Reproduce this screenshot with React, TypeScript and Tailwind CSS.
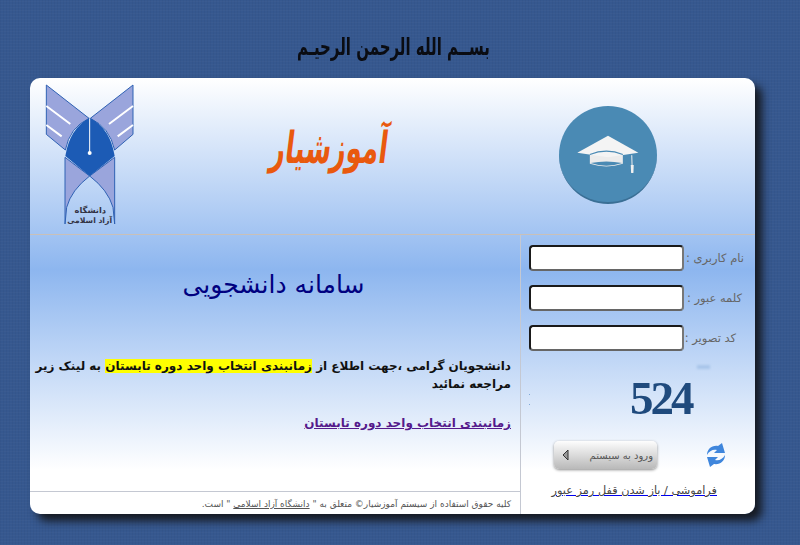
const fields = [
  { label: "نام کاربری :", pr: "pr-[11px]" },
  { label: "کلمه عبور :", pr: "pr-[13px]" },
  { label: "کد تصویر :", pr: "pr-[19px]" },
];

function UniversityLogo() {
  return (
    <svg viewBox="76 42 270 426" width="90" height="142">
      <g fill="#9aa5dc" stroke="#2f62b4" strokeWidth="3">
        <path d="M80 45 L208 145 Q150 172 137 240 L80 193 Z" />
        <path d="M340 45 L212 145 Q270 172 285 240 L340 193 Z" />
        <path d="M136 262 L210 318 Q155 360 141 412 L136 462 Z" />
        <path d="M285 262 L210 318 Q265 360 280 412 L285 462 Z" />
      </g>
      <path d="M137 258 Q150 175 210 143 Q272 175 285 258 L210 318 Z" fill="#1c5bb5" />
      <path d="M80 108 L152 162 M80 165 L126 199 M340 108 L268 162 M340 165 L294 199" stroke="#fff" strokeWidth="6" fill="none" />
      <path d="M210 145 L210 248" stroke="#fff" strokeWidth="3" />
      <circle cx="210" cy="249" r="6" fill="#fff" />
      <text x="212" y="430" textAnchor="middle" fontSize="25" fill="#334" fontFamily="'DejaVu Sans', sans-serif" fontWeight="700">
        دانشگاه
      </text>
      <text x="210" y="458" textAnchor="middle" fontSize="23" fill="#334" fontFamily="'DejaVu Sans', sans-serif" fontWeight="700">
        آزاد اسلامی
      </text>
    </svg>
  );
}

function CapBadge() {
  return (
    <div className="w-[98px] h-[98px] rounded-full bg-[#4a8ab4] border-b-2 border-[#3a6f95] flex items-center justify-center">
      <svg viewBox="105 115 200 130" width="66" height="43">
        <path d="M150 178 L150 208 Q200 224 250 208 L250 178 Q200 160 150 178 Z" fill="#ececec" />
        <path d="M152 206 Q200 196 248 206 Q200 222 152 206 Z" fill="#4a8ab4" />
        <path d="M205 123 L297 175 L205 188 L112 175 Z" fill="#f4f4f4" />
        <path d="M150 180 Q200 160 250 180" stroke="#4a8ab4" strokeWidth="4" fill="none" />
        <path d="M277 182 L278 215" stroke="#f0f0f0" strokeWidth="3" />
        <path d="M274 212 H283 L282 236 H275 Z" fill="#f0f0f0" />
      </svg>
    </div>
  );
}

function RefreshIcon() {
  return (
    <svg viewBox="0 0 20 24" width="20" height="24" className="ml-[49px]">
      <g fill="#3f86dc">
        <path d="M1 12 C1 6 6 2 12 3 L16 0 L19 10 L8 10 L11 7 C7 6 3 8 1 12 Z" />
        <path d="M19 12 C19 18 14 22 8 21 L4 24 L1 14 L12 14 L9 17 C13 18 17 16 19 12 Z" />
      </g>
    </svg>
  );
}

export default function App() {
  return (
    <div className="w-[800px] h-[545px] overflow-hidden flex flex-col bg-[#36588f] bg-[image:repeating-linear-gradient(0deg,rgba(255,255,255,0.02)_0_1px,transparent_1px_3px),repeating-linear-gradient(90deg,rgba(0,0,0,0.03)_0_1px,transparent_1px_3px)] font-['DejaVu_Sans',sans-serif]">
      <div dir="rtl" className="h-[78px] pt-[22px] pl-[298px] w-[490px] text-[#0a0c12] text-[15px] leading-[44px] font-bold whitespace-nowrap tracking-[-0.5px] scale-y-[1.6]">
        بســم الله الرحمن الرحیـم
      </div>

      <div className="ml-[30px] w-[725px] h-[436px] rounded-[10px] bg-[linear-gradient(180deg,#ffffff_0%,#8db6ef_44%,#ffffff_90%)] shadow-[7px_7px_9px_#161a22] flex flex-col overflow-hidden">
        <div className="h-[157px] shrink-0 border-b border-[#c9c0b8] flex items-start">
          <div className="w-[105px] pl-[15px] pt-[6px]">
            <UniversityLogo />
          </div>
          <div className="w-[253px] pt-[35px] pl-[128px]">
            <div dir="rtl" className="text-[#e9590e] text-[26px] leading-[70px] font-bold whitespace-nowrap -skew-x-12 scale-y-[1.7]">
              آموزشیار
            </div>
          </div>
          <div className="ml-auto pr-[98px] pt-[28px]">
            <CapBadge />
          </div>
        </div>

        <div dir="rtl" className="flex-1 flex">
          <div className="relative w-[235px] shrink-0 border-l border-[#c4c8d2] flex flex-col">
            <div className="pt-[10px] flex flex-col gap-[14px]">
              {fields.map((f) => (
                <div key={f.label} className="flex items-center">
                  <label className={`w-[71px] shrink-0 pt-[2px] text-[11.5px] text-[#666] whitespace-nowrap ${f.pr}`}>{f.label}</label>
                  <input className="w-[155px] h-[26px] bg-white rounded-[4px] border-2 border-t-[#1a1a1a] border-l-[#1a1a1a] border-r-[#777] border-b-[#666]" />
                </div>
              ))}
            </div>

            <span className="absolute left-[176px] top-[130px] w-[13px] h-[4px] bg-[#a9c6ea] blur-[1px]" />
            <span className="absolute left-[8px] top-[159px] w-[1px] h-[1px] bg-[#7fa8d8]" />
            <span className="absolute left-[8px] top-[169px] w-[1px] h-[1px] bg-[#7fa8d8]" />

            <div dir="ltr" className="h-[90px] pl-[109px] pt-[22px] text-[#1f4a7d] text-[47px] leading-[50px] font-bold tracking-[-3px] font-['Liberation_Serif',serif]">
              <span className="blur-[0.6px]">524</span>
            </div>

            <div dir="ltr" className="flex items-center pl-[33px]">
              <button className="w-[103px] h-[28px] rounded-[5px] bg-[linear-gradient(180deg,#fdfdfd,#b9b9b9)] shadow-[0_1px_3px_#8a8a8a] flex items-center pl-[8px] pr-[4px] justify-between">
                <svg viewBox="0 0 7 12" width="7" height="12">
                  <path d="M6 1 L1 6 L6 11 Z" fill="#999" stroke="#333" strokeWidth="1" />
                </svg>
                <span dir="rtl" className="text-[10px] text-[#555] whitespace-nowrap">ورود به سیستم</span>
              </button>
              <RefreshIcon />
            </div>

            <a dir="rtl" className="mt-[14px] mr-[38px] text-[11.3px] text-[#444] underline decoration-[#0000ee] whitespace-nowrap">
              فراموشی / باز شدن قفل رمز عبور
            </a>
          </div>

          <div className="flex-1 flex flex-col">
            <div className="flex-1 pr-[9px] pl-[3px]">
              <h1 className="pt-[32px] pl-[3px] text-center text-[25px] leading-[36px] text-[#000080]">سامانه دانشجویی</h1>
              <p className="mt-[54px] text-[12px] leading-[18px] font-bold text-[#111]">
                دانشجویان گرامی ،جهت اطلاع از{" "}
                <span className="bg-[#ffff00]">زمانبندی انتخاب واحد دوره تابستان</span> به لینک زیر مراجعه نمائید
              </p>
              <a className="block mt-[21px] text-[12px] leading-[18px] font-bold text-[#551a8b] underline">
                زمانبندی انتخاب واحد دوره تابستان
              </a>
            </div>
            <div className="h-[23px] shrink-0 border-t border-[#c4c8d2] px-[9px] text-[9px] leading-[24px] text-[#555] whitespace-nowrap">
              کلیه حقوق استفاده از سیستم آموزشیار© متعلق به " <span className="underline">دانشگاه آزاد اسلامی</span> " است.
            </div>
          </div>
        </div>
      </div>
    </div>
  );
}
